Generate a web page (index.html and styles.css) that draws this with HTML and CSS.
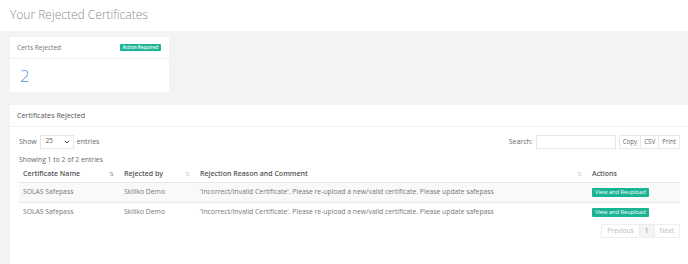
FILE: index.html
```html
<!DOCTYPE html>
<html lang="en">
  <head>
    <meta charset="utf-8" />
    <title>Your Rejected Certificates</title>
    <link rel="stylesheet" href="styles.css">
  </head>
  <body>
    <div class="page-heading">
      <h2>Your Rejected Certificates</h2>
    </div>
    <div class="wrapper">
      <div class="ibox stat">
        <div class="ibox-title">
          <span>Certs Rejected</span>
          <span class="label">Action Required</span>
        </div>
        <div class="ibox-content">
          <h1 class="count">2</h1>
        </div>
      </div>

      <div class="ibox panel">
        <div class="ibox-title">
          <span>Certificates Rejected</span>
        </div>
        <div class="ibox-content">
          <div class="dt-top">
            <div class="dt-length">
              Show
              <span class="select">25 <svg width="6" height="4" viewBox="0 0 6 4"><path d="M0.8 0.8 L3 3 L5.2 0.8" fill="none" stroke="#555" stroke-width="1"/></svg></span>
              entries
            </div>
            <div class="dt-search">
              Search:
              <span class="search-input"></span>
              <div class="btn-group">
                <span class="btn">Copy</span><span class="btn">CSV</span><span class="btn">Print</span>
              </div>
            </div>
          </div>
          <div class="dt-info">Showing 1 to 2 of 2 entries</div>
          <table class="table">
            <thead>
              <tr>
                <th class="col-name">Certificate Name <span class="sort active">&#8645;</span></th>
                <th class="col-by">Rejected by <span class="sort">&#8645;</span></th>
                <th class="col-reason">Rejection Reason and Comment <span class="sort">&#8645;</span></th>
                <th class="col-actions">Actions</th>
              </tr>
            </thead>
            <tbody>
              <tr>
                <td>SOLAS Safepass</td>
                <td>Skillko Demo</td>
                <td>'Incorrect/Invalid Certificate'. Please re-upload a new/valid certificate. Please update safepass</td>
                <td><span class="btn-primary">View and Reupload</span></td>
              </tr>
              <tr>
                <td>SOLAS Safepass</td>
                <td>Skillko Demo</td>
                <td>'Incorrect/Invalid Certificate'. Please re-upload a new/valid certificate. Please update safepass</td>
                <td><span class="btn-primary">View and Reupload</span></td>
              </tr>
            </tbody>
          </table>
          <div class="pagination">
            <span class="page disabled">Previous</span><span class="page current">1</span><span class="page disabled">Next</span>
          </div>
        </div>
      </div>
    </div>
  </body>
</html>
```

FILE: styles.css
```css
body{
  margin:0;
  color:#676a6c;
  background:#f3f3f4;
  font:400 7px/1.4 'Open Sans',sans-serif;
  overflow:hidden;
  height:264px;
}
*,:after,:before{box-sizing:border-box}

.page-heading{
  height:31px;
  background:#fff;
  padding:0 10px;
  display:flex;
  align-items:center;
}
.page-heading h2{
  margin:0;
  font-size:12px;
  font-weight:300;
  color:#8a8c8e;
}

.wrapper{
  padding:6px 0 0 10px;
}

.ibox{
  background:#fff;
}
.ibox-title{
  display:flex;
  justify-content:space-between;
  align-items:center;
  border-bottom:1px solid #eef0f1;
  padding:0 8px 0 7px;
}

.stat{
  width:159px;
  height:55px;
}
.stat .ibox-title{
  height:22px;
  font-size:6.6px;
  color:#777;
}
.stat .label{
  background:#1ab394;
  color:#fff;
  font-size:4.6px;
  font-weight:600;
  padding:0 3px;
  line-height:7px;
  border-radius:1px;
}
.stat .ibox-content{
  padding:5px 10px 0;
}
.count{
  margin:0;
  font-size:17px;
  font-weight:300;
  line-height:24px;
  color:#5d95d1;
}

.panel{
  margin-top:13px;
  height:159px;
}
.panel .ibox-title{
  height:22px;
  font-size:7.2px;
  color:#555;
}
.panel .ibox-content{
  padding:7px 8px 0 9px;
}

.dt-top{
  display:flex;
  justify-content:space-between;
  align-items:center;
  height:15px;
}
.dt-length,
.dt-search{
  display:flex;
  align-items:center;
  gap:3px;
}
.select{
  display:inline-flex;
  justify-content:space-between;
  align-items:center;
  width:34px;
  height:14px;
  border:1px solid #e5e6e7;
  padding:0 3px 0 5px;
  font-size:6.2px;
  color:#555;
}
.search-input{
  width:80px;
  height:14px;
  border:1px solid #e5e6e7;
}
.btn-group{
  display:flex;
}
.btn{
  height:14px;
  line-height:12px;
  border:1px solid #e7eaec;
  padding:0 3px;
  font-size:6.2px;
  color:#666;
}
.btn + .btn{
  margin-left:-1px;
}

.dt-info{
  margin-top:4px;
  height:13px;
  line-height:13px;
  font-size:6.8px;
}

.table{
  width:100%;
  border-collapse:collapse;
  margin-top:1px;
}
.table th{
  text-align:left;
  font-weight:600;
  color:#555;
  height:15px;
  padding:0 4px;
  border-bottom:1px solid #e7eaec;
  position:relative;
}
.table th .sort{
  position:absolute;
  right:6px;
  top:3px;
  font-size:6px;
  color:#ccc;
  font-weight:400;
}
.table th .sort.active{
  color:#999;
}
.col-name{width:101px}
.col-by{width:76px}
.col-reason{width:392px}
.table td{
  height:20px;
  padding:0 4px;
  border-top:1px solid #e7eaec;
  font-size:6.8px;
  color:#777;
  white-space:nowrap;
}
.table tbody tr:nth-child(odd){
  background:#f9f9f9;
}
.btn-primary{
  display:inline-block;
  background:#1ab394;
  color:#fff;
  font-size:5.7px;
  padding:0 3px;
  line-height:9px;
  border-radius:1px;
}

.pagination{
  display:flex;
  justify-content:flex-end;
  margin-top:2px;
}
.page{
  border:1px solid #eee;
  height:14px;
  line-height:12px;
  padding:0 5px;
  font-size:6.6px;
}
.page + .page{
  margin-left:-1px;
}
.page.disabled{
  color:#bbb;
}
.page.current{
  background:#f4f4f4;
  color:#888;
}
```
